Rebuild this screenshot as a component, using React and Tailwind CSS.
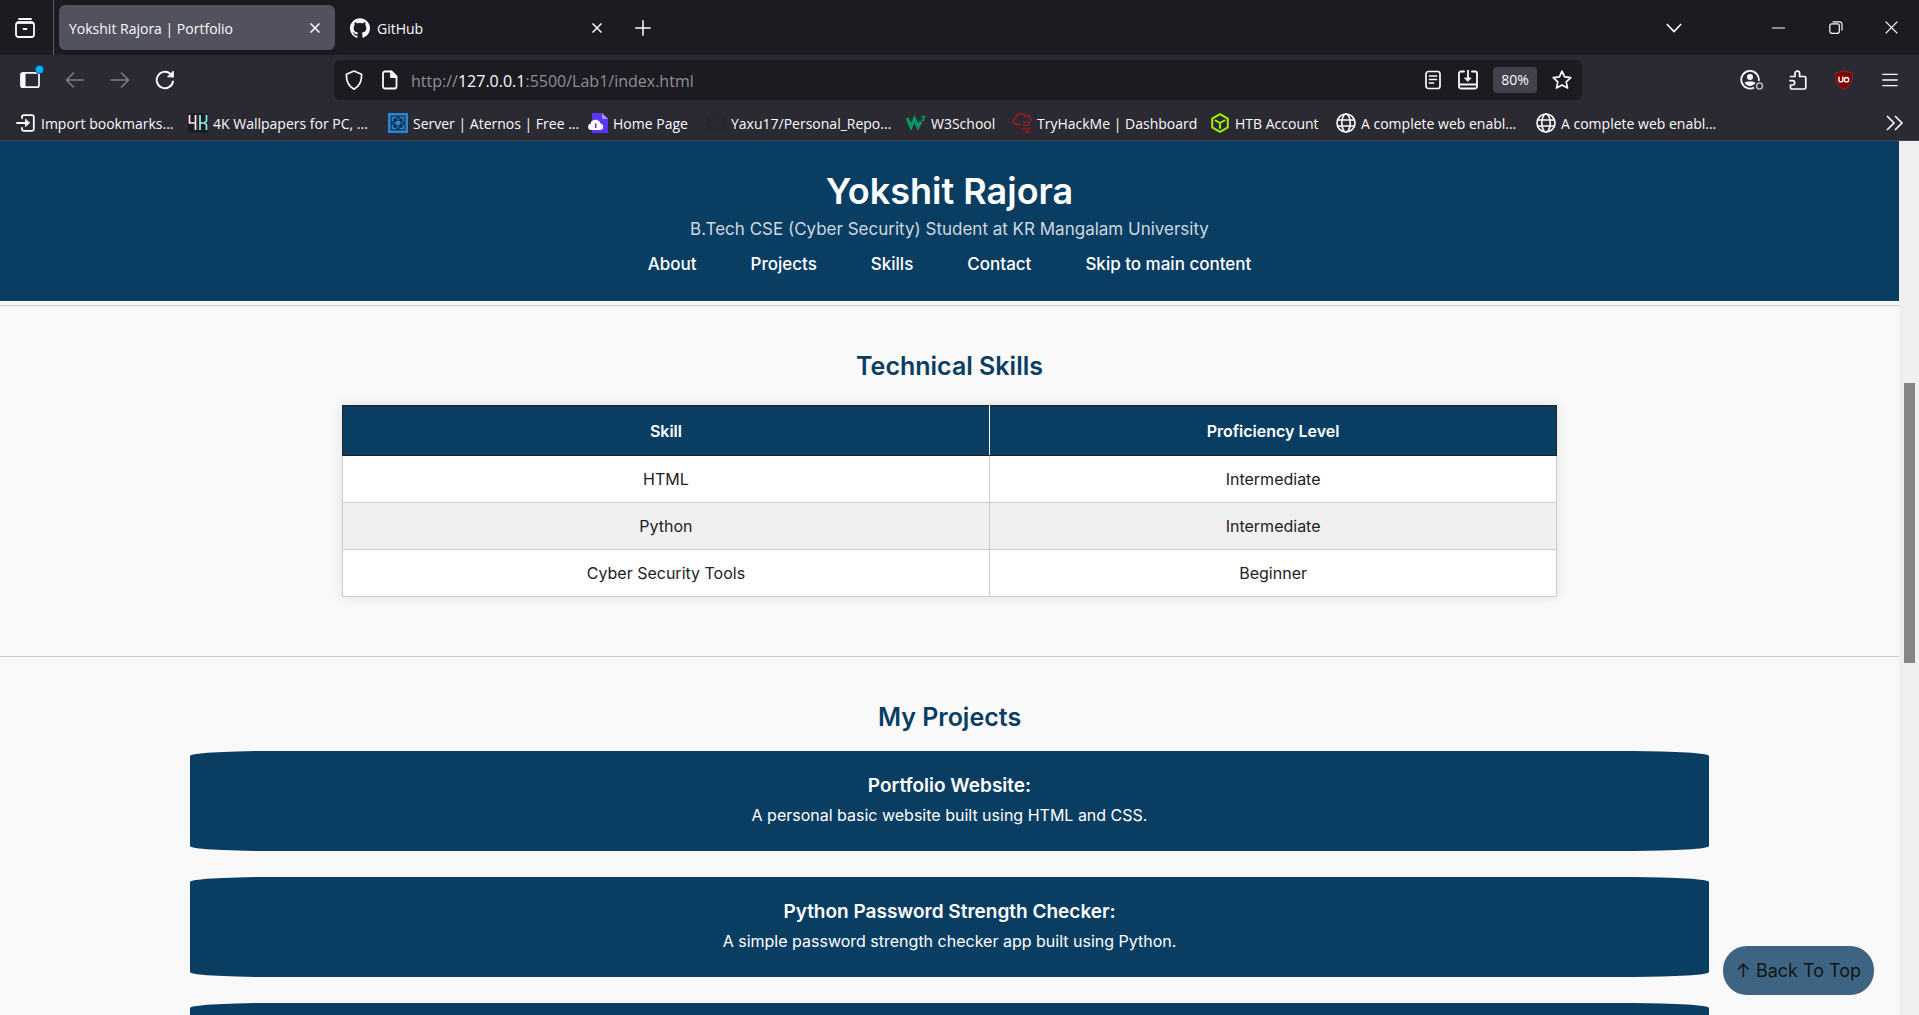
import React from "react";
import { SiGithub } from "react-icons/si";

const Svg = ({ s = 20, children, ...p }) => (
  <svg width={s} height={s} viewBox="0 0 20 20" fill="none" stroke="currentColor" strokeWidth="1.6" strokeLinecap="round" strokeLinejoin="round" className="shrink-0" aria-hidden="true" {...p}>
    {children}
  </svg>
);

const Globe = () => (
  <Svg>
    <circle cx="10" cy="10" r="9" />
    <ellipse cx="10" cy="10" rx="4.2" ry="9" />
    <path d="M1.5 7h17M1.5 13h17" />
  </Svg>
);

const ImportIcon = () => (
  <Svg strokeWidth="1.8">
    <path d="M6 5V4a1.800 1.800 0 0 1 1.800-1.800H16A1.800 1.800 0 0 1 17.800 4v12a1.800 1.800 0 0 1-1.800 1.800H7.800A1.800 1.800 0 0 1 6 16v-1M1 10h9" />
    <path d="M9.500 6.500v7l4-3.500z" fill="currentColor" strokeWidth=".8" />
  </Svg>
);

const WallpaperIcon = () => (
  <Svg strokeWidth="1.7" strokeLinecap="butt" strokeLinejoin="miter">
    <rect width="20" height="20" fill="#1b1e22" stroke="none" />
    <path d="M1.500 2v8h6M7.500 2v15" stroke="#f4f4f4" />
    <path d="M2.700 2v6.800M8.900 2v15" stroke="#c23a5c" strokeWidth=".8" />
    <path d="M12 2v15M18.500 2v6l-2 2 2 2v5M12 10h5" stroke="#8ff0f2" />
  </Svg>
);

const AternosIcon = () => (
  <Svg strokeLinecap="butt" strokeLinejoin="miter">
    <rect width="20" height="20" fill="#2b87d3" stroke="none" />
    <rect x="2.500" y="2.500" width="15" height="15" fill="#14324f" stroke="none" />
    <path d="M4.500 8.500v-4h4M11.500 4.500h4v4M15.500 11.500v4h-4M8.500 15.500h-4v-4" stroke="#2b87d3" strokeWidth="1.600" />
    <path d="M10 5.500v2M10 12.500v2M5.500 10h2M12.500 10h2" stroke="#2b87d3" />
    <rect x="8" y="8" width="4" height="4" fill="#2b87d3" stroke="none" />
  </Svg>
);

const HomeCloudIcon = () => (
  <Svg stroke="none">
    <path d="M4 0h10l6 6v14H4z" fill="#5b35f5" />
    <path d="M14 0l6 6h-6z" fill="#a792ff" />
    <path d="M3 17a3.300 3.300 0 0 1-.3-6.500C3 5.500 11.500 5.500 12.500 10.500A3.300 3.300 0 0 1 12.500 17z" fill="#fff" />
    <path d="M7.700 11v3.500" stroke="#5b35f5" strokeWidth="1.600" />
  </Svg>
);

const W3Icon = () => (
  <Svg stroke="#059862" strokeLinecap="butt" strokeLinejoin="miter">
    <path d="M1 5l4 9 3.500-8 3.500 8 3-5.500" strokeWidth="3.200" />
    <path d="M15.500 3.500h3l-1.500 2c1.500 0 2 2.500-1.500 2" strokeWidth="1.300" />
  </Svg>
);

const ThmIcon = () => (
  <Svg stroke="#b3151b" strokeWidth="1.300">
    <path d="M8.500 11.500H4a3.400 3.400 0 0 1-.2-6.600A5 5 0 0 1 13.300 3.500 3.600 3.600 0 0 1 18.800 7.500" />
    <path d="M11.500 9.500h2M16 9.500h3M11.500 12h1M15 12h3M10.500 16h3.500M16 16h1.500M14 19h4" strokeDasharray="2 1" />
  </Svg>
);

const HtbIcon = () => (
  <Svg stroke="#9fef00" strokeWidth="2">
    <path d="M10 1.200l7.800 4.400v8.800L10 18.800l-7.800-4.400V5.600z" />
    <path d="M5.500 7.500L10 10l4.500-2.500M10 10v5" />
  </Svg>
);

const bookmarks = [
  [<ImportIcon />, "Import bookmarks...", "w-[172px]"],
  [<WallpaperIcon />, "4K Wallpapers for PC, ...", "w-[200px]"],
  [<AternosIcon />, "Server | Aternos | Free ...", "w-[200px]"],
  [<HomeCloudIcon />, "Home Page", "w-[118px]"],
  [<SiGithub size={20} className="shrink-0 text-[#24292e]" />, "Yaxu17/Personal_Repo...", "w-[200px]"],
  [<W3Icon />, "W3School", "w-[106px]"],
  [<ThmIcon />, "TryHackMe | Dashboard", "w-[198px]"],
  [<HtbIcon />, "HTB Account", "w-[126px]"],
  [<Globe />, "A complete web enabl...", "w-[200px]"],
  [<Globe />, "A complete web enabl...", "w-[200px]"],
];

const CloseX = ({ s = 10, w = 1.5 }) => (
  <svg width={s} height={s} viewBox="0 0 10 10" stroke="currentColor" strokeWidth={w} aria-hidden="true">
    <path d="M.5.5l9 9M9.500.5l-9 9" />
  </svg>
);

const IconButton = ({ label, className = "", children }) => (
  <button type="button" aria-label={label} className={"flex h-9 shrink-0 items-center justify-center " + className}>
    {children}
  </button>
);

function TabBar() {
  return (
    <div className="flex h-[55px] items-center bg-[#1c1b22]">
      <div className="flex h-full w-[54px] items-center border-r border-[#5b5b66]">
        <IconButton label="Recent browsing" className="w-[50px]">
          <Svg strokeWidth="1.800">
            <path d="M4 1h12" />
            <rect x="1" y="4.500" width="18" height="14.500" rx="2.500" />
            <path d="M3 4.500h14" strokeWidth="2.400" />
            <path d="M8.500 11h3" />
          </Svg>
        </IconButton>
      </div>
      <div className="ml-[5px] flex h-[45px] w-[276px] items-center rounded-md bg-[#52525e] pr-2 pl-[10px] shadow">
        <span className="flex-1 pt-0.5">Yokshit Rajora | Portfolio</span>
        <IconButton label="Close tab Portfolio" className="w-6"><CloseX /></IconButton>
      </div>
      <div className="flex h-[45px] w-[276px] items-center gap-[7px] pr-[2px] pl-[15px]">
        <SiGithub size={20} />
        <span className="flex-1 pt-0.5">GitHub</span>
        <IconButton label="Close tab GitHub" className="w-6"><CloseX /></IconButton>
      </div>
      <IconButton label="New tab" className="ml-3 w-10">
        <Svg s={16} strokeWidth="1.900"><path d="M10 1v18M1 10h18" /></Svg>
      </IconButton>
      <div className="flex-1" />
      <IconButton label="List all tabs" className="mr-[52px] w-12">
        <svg width="16" height="10" viewBox="0 0 16 10" fill="none" stroke="currentColor" strokeWidth="1.600"><path d="M.8 1L8 8.500 15.200 1" /></svg>
      </IconButton>
      <IconButton label="Minimize" className="w-[57px]">
        <svg width="13" height="2"><path d="M0 1h13" stroke="currentColor" /></svg>
      </IconButton>
      <IconButton label="Restore" className="w-[57px]">
        <svg width="14" height="13" viewBox="0 0 14 13" fill="none" stroke="currentColor" strokeWidth="1.200"><rect x=".8" y="2.800" width="9.500" height="9.500" rx="2" /><path d="M3.500.8H10.500a2.500 2.500 0 0 1 2.500 2.500V9.500" /></svg>
      </IconButton>
      <IconButton label="Close window" className="w-[55px]"><CloseX s={13} w={1} /></IconButton>
    </div>
  );
}

function NavBar() {
  return (
    <div className="flex h-[50px] items-center bg-[#2b2a33]">
      <div className="flex w-[334px] items-center pl-2">
        <IconButton label="Sidebars" className="relative w-11">
          <Svg strokeWidth="1.700"><rect x="1" y="2.800" width="18" height="14.400" rx="2" /><path d="M1.500 3.500h3.500v13H1.500z" fill="currentColor" strokeWidth="1" /></Svg>
          <span className="absolute top-1 right-[9px] size-[7px] rounded-full bg-[#00b3f4] ring-1 ring-[#0060a0]" />
        </IconButton>
        <IconButton label="Back" className="w-[45px] text-[#7d7d85]"><Svg><path d="M18.500 10H1.500M8.500 3L1.500 10l7 7" /></Svg></IconButton>
        <IconButton label="Forward" className="w-[45px] text-[#7d7d85]"><Svg><path d="M1.500 10h17M11.500 3l7 7-7 7" /></Svg></IconButton>
        <IconButton label="Reload" className="w-[45px]"><Svg strokeWidth="1.900"><path d="M18 11.500A8.200 8.200 0 1 1 15.500 4L18 6.500" /><path d="M18.300 1.500v5.300H13z" fill="currentColor" strokeWidth="1" /></Svg></IconButton>
      </div>
      <div className="flex h-10 w-[1248px] min-w-0 items-center rounded-md bg-[#1c1b22]">
        <IconButton label="Tracking protection" className="w-10">
          <Svg strokeWidth="1.700"><path d="M10 1l7.500 3.200c.5 6.500-1.500 11.500-7.500 15C4 15.700 2 10.700 2.500 4.200z" /></Svg>
        </IconButton>
        <IconButton label="Site information" className="w-8">
          <Svg strokeWidth="1.800"><path d="M5 1.500h6.500l5 5v10a2 2 0 0 1-2 2H5a2 2 0 0 1-2-2v-13a2 2 0 0 1 2-2z" /><path d="M11 1.500v5.500h5.500z" fill="currentColor" /></Svg>
        </IconButton>
        <div className="relative ml-[5px] flex-1 pt-0.5 text-base">
          <input type="text" aria-label="Address" className="absolute inset-0 w-full bg-transparent outline-none" />
          <span className="text-[#8f8f98]">http://<span className="text-[#fbfbfe]">127.0.0.1</span>:5500/Lab1/index.html</span>
        </div>
        <IconButton label="Reader view" className="w-[35px]">
          <Svg strokeWidth="1.700"><rect x="3" y="1.500" width="14" height="17" rx="2.500" /><path d="M6.500 6h7M6.500 9.500h7M6.500 13h4" /></Svg>
        </IconButton>
        <IconButton label="Save page" className="w-[35px]">
          <Svg strokeWidth="1.800"><path d="M6 1.500H2.800A1.800 1.800 0 0 0 1 3.300V16.700a1.800 1.800 0 0 0 1.800 1.800H17.200a1.800 1.800 0 0 0 1.800-1.800V3.300a1.800 1.800 0 0 0-1.800-1.800H14M1 14.500h18M10 0v9" /><path d="M6.800 8h6.400L10 11.300z" fill="currentColor" strokeWidth=".8" /></Svg>
        </IconButton>
        <button type="button" className="mx-2 h-[26px] w-11 shrink-0 rounded bg-[#42414d] text-sm">80%</button>
        <IconButton label="Bookmark this page" className="mr-1 w-[33px]">
          <Svg strokeWidth="1.700"><path d="M10 1.200l2.600 5.700 6.200.7-4.600 4.200 1.300 6.200L10 14.900 4.500 18l1.300-6.200L1.200 7.600l6.200-.7z" /></Svg>
        </IconButton>
      </div>
      <div className="flex flex-1 items-center justify-end pr-[6px]">
        <IconButton label="Account" className="w-[46px]">
          <svg width="24" height="22" viewBox="0 0 24 22" fill="none" stroke="currentColor" strokeWidth="1.800"><path d="M14 18.600A8.800 8.800 0 1 1 18.800 12" /><circle cx="10" cy="8" r="3" fill="currentColor" stroke="none" /><path d="M4.500 13.500c2-1.500 9-1.500 11 0-2 4.500-9 4.500-11 0z" fill="currentColor" stroke="none" /><circle cx="19.500" cy="17" r="3" strokeWidth="1.500" stroke="#b9b9bf" /></svg>
        </IconButton>
        <IconButton label="Extensions" className="w-[46px]">
          <Svg strokeWidth="1.700"><path d="M2.500 6.500H7V3.500a2.300 2.300 0 0 1 4.600 0v3H16.500a1.300 1.300 0 0 1 1.300 1.300v9.900a1.300 1.300 0 0 1-1.300 1.300H3.800a1.300 1.300 0 0 1-1.300-1.300V15H4.500a2.200 2.200 0 0 0 0-4.400H2" /></Svg>
        </IconButton>
        <IconButton label="uBlock Origin" className="w-[46px]">
          <Svg><path d="M10 .5C7 2 4 2.500 1.500 2.800 1 10 3 16 10 19.500 17 16 19 10 18.500 2.800 16 2.500 13 2 10 .5z" fill="#800000" stroke="#a04040" strokeWidth=".6" /><path d="M5 7v3a1.900 1.900 0 0 0 3.800 0V7" stroke="#fff" strokeWidth="1.400" /><circle cx="12.500" cy="9.700" r="2.200" stroke="#fff" strokeWidth="1.400" /></Svg>
        </IconButton>
        <IconButton label="Application menu" className="w-[46px]">
          <Svg s={16}><path d="M1 3h18M1 10h18M1 17h18" /></Svg>
        </IconButton>
      </div>
    </div>
  );
}

function BookmarkBar() {
  return (
    <nav aria-label="Bookmarks" className="flex h-9 items-center border-b border-[#45454e] bg-[#2b2a33] pr-3 pl-4">
      <div className="flex items-center">
        {bookmarks.map(([icon, text, width], i) => (
          <a key={i} href="#" className={"flex items-center gap-[5px] whitespace-nowrap " + width}>
            {icon}
            <span className="pt-0.5">{text}</span>
          </a>
        ))}
      </div>
      <IconButton label="More bookmarks" className="ml-auto w-6">
        <svg width="18" height="16" viewBox="0 0 18 16" fill="none" stroke="currentColor" strokeWidth="1.600"><path d="M1 1l7 7-7 7M9 1l7 7-7 7" /></svg>
      </IconButton>
    </nav>
  );
}

const links = ["About", "Projects", "Skills", "Contact", "Skip to main content"];
const skills = [
  ["HTML", "Intermediate"],
  ["Python", "Intermediate"],
  ["Cyber Security Tools", "Beginner"],
];
const projects = [
  ["Portfolio Website:", "A personal basic website built using HTML and CSS."],
  ["Python Password Strength Checker:", "A simple password strength checker app built using Python."],
  ["", ""],
];

function Page() {
  return (
    <div className="min-w-0 flex-1 overflow-hidden bg-[#f9f9f9] text-center text-base text-[#222]">
      <header className="h-40 bg-[#0a3d62] pt-7 text-white">
        <h1 className="text-4xl leading-[44px] font-semibold">Yokshit Rajora</h1>
        <p className="mt-1 text-[17px] leading-6 text-[#ced8e0]">B.Tech CSE (Cyber Security) Student at KR Mangalam University</p>
        <nav aria-label="Sections" className="mt-[11px] flex justify-center gap-[54px] text-[17px] leading-6 font-medium">
          {links.map((l) => <a key={l} href="#">{l}</a>)}
        </nav>
      </header>
      <main>
        <section className="mt-1 border-t border-[#ccc] pt-10 pb-[59px]">
          <h2 className="text-[25px] leading-10 font-semibold text-[#0a3d62]">Technical Skills</h2>
          <table className="mx-auto mt-[19px] w-[64%] table-fixed border-collapse bg-white shadow-[0_0_12px_rgba(0,0,0,0.1)]">
            <colgroup><col className="w-[53.3%]" /><col /></colgroup>
            <thead>
              <tr className="h-[50px] bg-[#0a3d62] text-white">
                <th className="border border-[#222] border-r-white font-semibold">Skill</th>
                <th className="border border-[#222] border-l-white font-semibold">Proficiency Level</th>
              </tr>
            </thead>
            <tbody>
              {skills.map(([a, b]) => (
                <tr key={a} className="h-[47px] even:bg-[#f0f0f0]">
                  <td className="border border-[#ccc]">{a}</td>
                  <td className="border border-[#ccc]">{b}</td>
                </tr>
              ))}
            </tbody>
          </table>
        </section>
        <section className="border-t border-[#ccc] pt-10">
          <h2 className="text-[25px] leading-10 font-semibold text-[#0a3d62]">My Projects</h2>
          <ul className="mx-auto mt-[14px] flex w-4/5 flex-col gap-[26px]">
            {projects.map(([t, d]) => (
              <li key={t} className="h-[100px] rounded-[5%] bg-[#0a3d62] pt-5 text-white">
                <h3 className="text-[19px] leading-[30px] font-semibold">{t}</h3>
                <p className="leading-7">{d}</p>
              </li>
            ))}
          </ul>
        </section>
      </main>
    </div>
  );
}

export default function App() {
  return (
    <div className="relative flex h-screen flex-col overflow-hidden font-['Inter',sans-serif]">
      <div className="shrink-0 font-['Open_Sans',sans-serif] text-sm text-[#fbfbfe]">
        <TabBar />
        <NavBar />
        <BookmarkBar />
      </div>
      <div className="flex min-h-0 flex-1">
        <Page />
        <div className="w-5 shrink-0 bg-[#f0f0f0] pt-[242px]">
          <div className="ml-[5px] h-[280px] w-[11px] bg-[#858585]" />
        </div>
      </div>
      <a href="#" className="absolute right-[45px] bottom-5 flex h-[49px] w-[151px] items-center justify-center rounded-3xl bg-[#3d6483] text-lg text-[#141414]">
        ↑ Back To Top
      </a>
    </div>
  );
}
